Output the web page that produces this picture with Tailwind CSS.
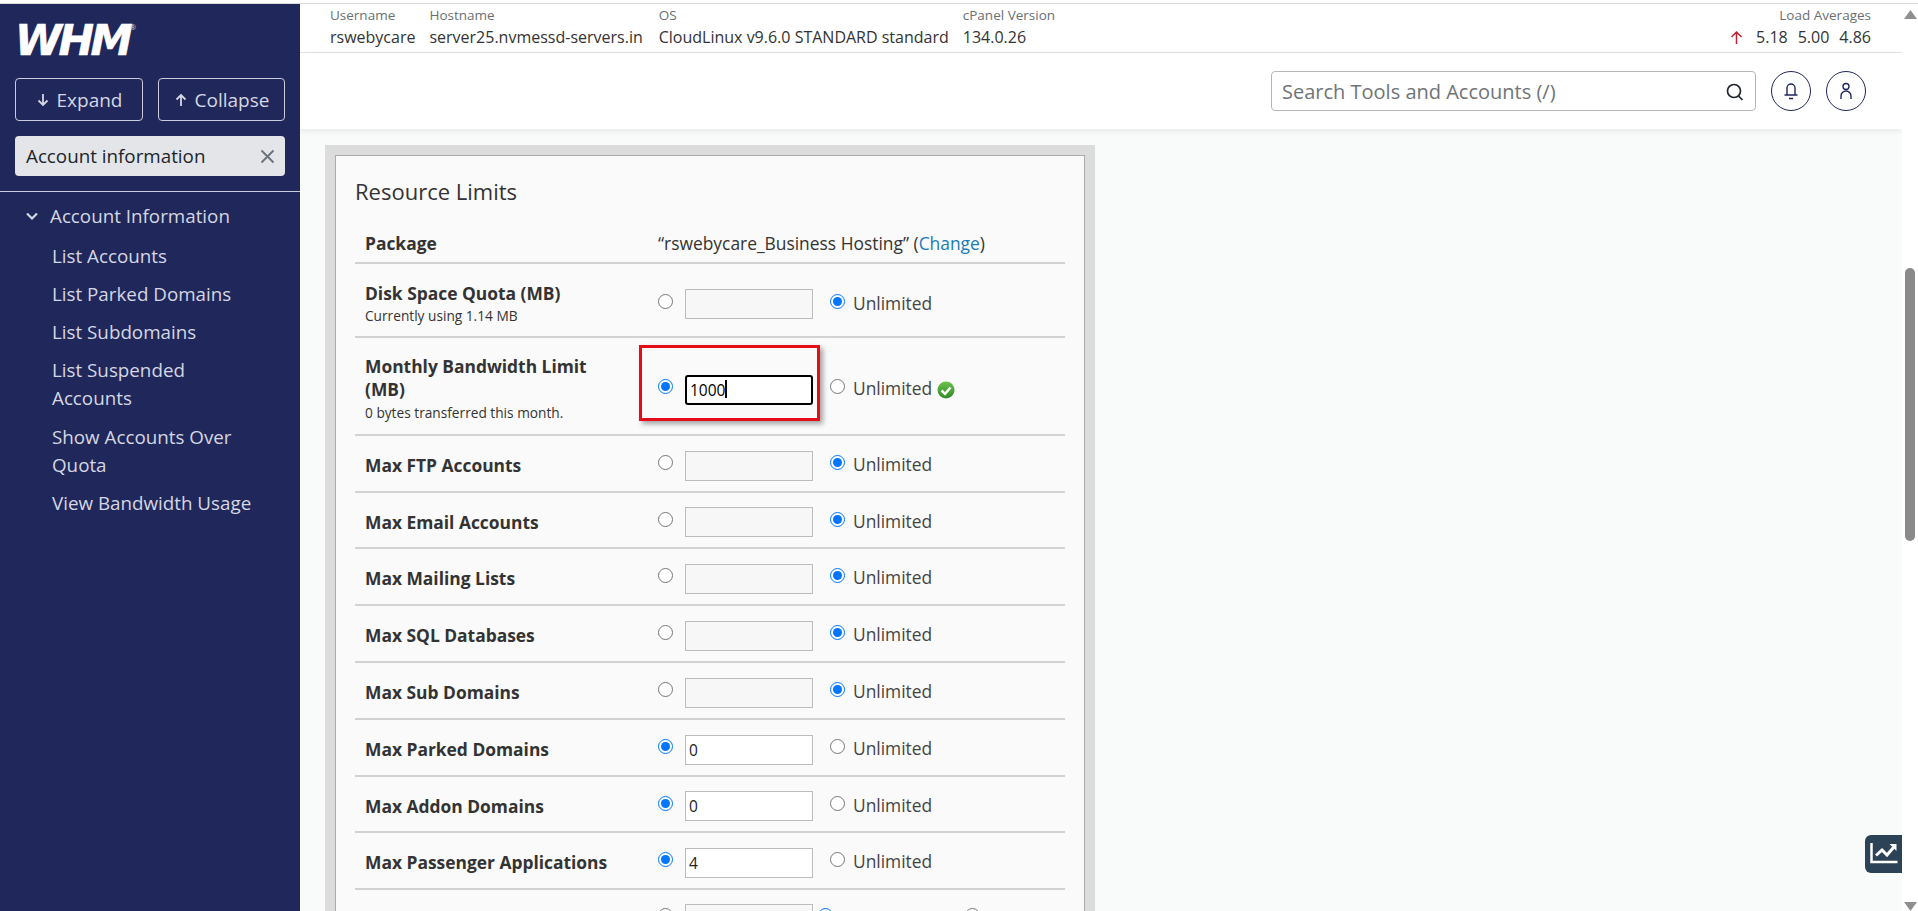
<!DOCTYPE html>
<html lang="en">
<head>
  <meta charset="UTF-8">
  <title>WHM - Resource Limits</title>
  <script src="https://cdn.jsdelivr.net/npm/@tailwindcss/browser@4"></script>
</head>
<body class="h-[911px] overflow-hidden bg-white font-['Open_Sans',sans-serif] text-[#333]">
<div class="h-[3px]"></div>
<div class="flex h-[908px] border-t border-[#dcdcdc]">

  <!-- Sidebar -->
  <aside class="w-[300px] shrink-0 bg-[#20275a] text-[#d5d7e3]">
    <div class="flex h-[74px] items-start pl-[15px] pt-[14px]">
      <span class="font-['DejaVu_Sans',sans-serif] font-bold italic text-[42.500px] leading-[46px] tracking-[-3.500px] text-white [-webkit-text-stroke:0.6px_white]">WHM</span>
      <span class="ml-[1px] mt-[6px] text-[7px] leading-[8px] text-[#c9ccdb]">®</span>
    </div>
    <div class="flex gap-[15px] px-[15px]">
      <button class="flex h-[43px] w-[128px] items-center justify-center gap-[7px] rounded border border-[#c9ccdb] pt-[1px] text-[19px]">
        <svg class="h-[14px] w-[14px]" viewBox="0 0 14 14" fill="none" stroke="currentColor" stroke-width="1.8"><path d="M7 1v11M2.500 7.500 7 12l4.500-4.500"/></svg>
        Expand
      </button>
      <button class="flex h-[43px] w-[127px] items-center justify-center gap-[7px] rounded border border-[#c9ccdb] pt-[1px] text-[19px]">
        <svg class="h-[14px] w-[14px]" viewBox="0 0 14 14" fill="none" stroke="currentColor" stroke-width="1.8"><path d="M7 13V2M2.500 6.500 7 2l4.500 4.500"/></svg>
        Collapse
      </button>
    </div>
    <div class="mx-[15px] mt-[15px] flex h-[40px] items-center justify-between rounded bg-[#e3e5e8] pl-[11px] pr-[10px] text-[18.800px] text-[#20242c]">
      Account information
      <svg class="h-[15px] w-[15px]" viewBox="0 0 15 15" fill="none" stroke="#6b7178" stroke-width="1.8"><path d="M1.500 1.500l12 12M13.500 1.500l-12 12"/></svg>
    </div>
    <div class="mt-[15px] border-t border-[#c9ccdb] pt-[8px] text-[18.800px]">
      <div class="flex h-[32px] items-center pl-[26px]">
        <svg class="mr-[12px] h-[12px] w-[12px]" viewBox="0 0 12 12" fill="none" stroke="currentColor" stroke-width="2.200"><path d="M1 3.500l5 5 5-5"/></svg>
        Account Information
      </div>
      <ul class="mt-[5px] pl-[52px] pr-[20px] leading-[28px]">
        <li class="py-[5px]">List Accounts</li>
        <li class="py-[5px]">List Parked Domains</li>
        <li class="py-[5px]">List Subdomains</li>
        <li class="pb-[6px] pt-[5px]">List Suspended<br>Accounts</li>
        <li class="py-[5px]">Show Accounts Over<br>Quota</li>
        <li class="py-[5px]">View Bandwidth Usage</li>
      </ul>
    </div>
  </aside>

  <!-- Main -->
  <main class="relative flex h-full w-[1602px] flex-col overflow-hidden bg-[#f9fafa]">
    <div class="flex h-[49px] shrink-0 items-start justify-between border-b border-[#e1e3e4] bg-white pl-[30px] pr-[31px] pt-[1px]">
      <div class="flex">
        <div class="mr-[14px]"><p class="text-[13.500px] leading-[20px] text-[#6a6f73]">Username</p><p class="text-[16px] leading-[25px]">rswebycare</p></div>
        <div class="mr-[16px]"><p class="text-[13.500px] leading-[20px] text-[#6a6f73]">Hostname</p><p class="text-[16px] leading-[25px]">server25.nvmessd-servers.in</p></div>
        <div class="mr-[14px]"><p class="text-[13.500px] leading-[20px] text-[#6a6f73]">OS</p><p class="text-[16px] leading-[25px]">CloudLinux v9.6.0 STANDARD standard</p></div>
        <div><p class="text-[13.500px] leading-[20px] text-[#6a6f73]">cPanel Version</p><p class="text-[16px] leading-[25px]">134.0.26</p></div>
      </div>
      <div class="text-right">
        <p class="text-[13.500px] leading-[20px] text-[#6a6f73]">Load Averages</p>
        <p class="flex items-center justify-end gap-[10px] text-[16px] leading-[25px]">
          <svg class="mr-[3px] h-[15px] w-[13px]" viewBox="0 0 13 15" fill="none" stroke="#c4202f" stroke-width="1.5"><path d="M6.500 14V2M1.500 7l5-5 5 5"/></svg>
          <span>5.18</span><span>5.00</span><span>4.86</span>
        </p>
      </div>
    </div>
    <div class="flex h-[76px] shrink-0 items-center justify-end gap-[15px] bg-white pr-[36px] shadow-[0_2px_6px_rgba(0,0,0,0.08)]">
      <div class="flex h-[40px] w-[485px] items-center justify-between rounded border border-[#b5b8bb] bg-white pl-[10px] pr-[10px] pt-[1px] text-[20px] text-[#6f7478]">
        Search Tools and Accounts (/)
        <svg class="h-[20px] w-[20px]" viewBox="0 0 20 20" fill="none" stroke="#20242c" stroke-width="1.7"><circle cx="9" cy="9" r="6.500"/><path d="M13.500 14l4 4"/></svg>
      </div>
      <span class="flex h-[40px] w-[40px] items-center justify-center rounded-full border border-[#20275a]">
        <svg class="h-[20px] w-[20px]" viewBox="0 0 20 20" fill="none" stroke="#20275a" stroke-width="1.400"><path d="M6 13.500V7a4 4 0 0 1 8 0v6.500M3.500 14h13M8 17.500h4"/></svg>
      </span>
      <span class="flex h-[40px] w-[40px] items-center justify-center rounded-full border border-[#20275a]">
        <svg class="h-[20px] w-[20px]" viewBox="0 0 20 20" fill="none" stroke="#20275a" stroke-width="1.400"><circle cx="10" cy="5.500" r="3"/><path d="M5 18v-3a5 5 0 0 1 10 0v3"/></svg>
      </span>
    </div>

    <!-- Resource limits card -->
    <div class="ml-[25px] mt-[16px] h-[800px] w-[770px] shrink-0 border-x-[10px] border-t-[10px] border-[#dcdcdc]">
      <div class="h-full border-x border-t border-[#a9abad] bg-[#fafafa] px-[19px]">
        <h2 class="flex h-[60px] items-center pt-[10px] text-[22px] font-normal text-[#333]">Resource Limits</h2>
        <div class="flex h-[48px] items-center border-b-2 border-[#d2d2d2] pl-[10px] pt-[8px]">
          <span class="w-[293px] text-[17.400px] font-bold">Package</span>
          <span class="text-[17.400px]">“rswebycare_Business Hosting” (<a href="#" class="text-[#1b7cb6]">Change</a>)</span>
        </div>

        <div class="flex h-[74px] items-center border-b-2 border-[#d2d2d2] pl-[10px] pt-[8px]">
          <div class="w-[293px]"><p class="text-[17.400px] font-bold leading-[24px]">Disk Space Quota (MB)</p><p class="text-[13.700px] leading-[22px]">Currently using 1.14 MB</p></div>
          <input type="radio" name="disk" class="mb-[6px] h-[15px] w-[15px] accent-[#0075ff]">
          <input type="text" disabled class="ml-[12px] h-[30px] w-[128px] border border-[#bcbcbc] bg-[#f7f7f7]">
          <input type="radio" name="disk" checked class="mb-[6px] ml-[17px] h-[15px] w-[15px] accent-[#0075ff]">
          <span class="mb-[2px] ml-[8px] text-[17.400px] text-[#444]">Unlimited</span>
        </div>

        <div class="flex h-[98px] items-center border-b-2 border-[#d2d2d2] pl-[10px] pt-[7px]">
          <div class="w-[293px]"><p class="text-[17.400px] font-bold leading-[23px]">Monthly Bandwidth Limit<br>(MB)</p><p class="text-[13.700px] leading-[24px]">0 bytes transferred this month.</p></div>
          <input type="radio" name="bw" checked class="mb-[6px] h-[15px] w-[15px] accent-[#0075ff]">
          <input type="text" value="1000" class="ml-[12px] h-[30px] w-[128px] rounded-[3px] border-2 border-black bg-white pl-[3px] text-[15.500px] text-black outline-none">
          <input type="radio" name="bw" class="mb-[6px] ml-[17px] h-[15px] w-[15px] accent-[#0075ff]">
          <span class="mb-[2px] ml-[8px] text-[17.400px] text-[#444]">Unlimited</span>
          <svg class="ml-[5px] h-[18px] w-[18px]" viewBox="0 0 18 18"><defs><linearGradient id="ok" x1="0" y1="0" x2="0" y2="1"><stop offset="0" stop-color="#6cc24a"/><stop offset="1" stop-color="#2c8a26"/></linearGradient></defs><circle cx="9" cy="9" r="8.500" fill="url(#ok)"/><path d="M4.500 9.500 8 13l5.500-6.500" fill="none" stroke="#fff" stroke-width="2.500"/></svg>
        </div>

        <div class="flex h-[57px] items-center border-b-2 border-[#d2d2d2] pl-[10px] pt-[4px]">
          <span class="w-[293px] text-[17.400px] font-bold">Max FTP Accounts</span>
          <input type="radio" name="ftp" class="mb-[6px] h-[15px] w-[15px] accent-[#0075ff]">
          <input type="text" disabled class="ml-[12px] h-[30px] w-[128px] border border-[#bcbcbc] bg-[#f7f7f7]">
          <input type="radio" name="ftp" checked class="mb-[6px] ml-[17px] h-[15px] w-[15px] accent-[#0075ff]">
          <span class="mb-[2px] ml-[8px] text-[17.400px] text-[#444]">Unlimited</span>
        </div>
        <div class="flex h-[56px] items-center border-b-2 border-[#d2d2d2] pl-[10px] pt-[4px]">
          <span class="w-[293px] text-[17.400px] font-bold">Max Email Accounts</span>
          <input type="radio" name="email" class="mb-[6px] h-[15px] w-[15px] accent-[#0075ff]">
          <input type="text" disabled class="ml-[12px] h-[30px] w-[128px] border border-[#bcbcbc] bg-[#f7f7f7]">
          <input type="radio" name="email" checked class="mb-[6px] ml-[17px] h-[15px] w-[15px] accent-[#0075ff]">
          <span class="mb-[2px] ml-[8px] text-[17.400px] text-[#444]">Unlimited</span>
        </div>
        <div class="flex h-[57px] items-center border-b-2 border-[#d2d2d2] pl-[10px] pt-[4px]">
          <span class="w-[293px] text-[17.400px] font-bold">Max Mailing Lists</span>
          <input type="radio" name="lists" class="mb-[6px] h-[15px] w-[15px] accent-[#0075ff]">
          <input type="text" disabled class="ml-[12px] h-[30px] w-[128px] border border-[#bcbcbc] bg-[#f7f7f7]">
          <input type="radio" name="lists" checked class="mb-[6px] ml-[17px] h-[15px] w-[15px] accent-[#0075ff]">
          <span class="mb-[2px] ml-[8px] text-[17.400px] text-[#444]">Unlimited</span>
        </div>
        <div class="flex h-[57px] items-center border-b-2 border-[#d2d2d2] pl-[10px] pt-[4px]">
          <span class="w-[293px] text-[17.400px] font-bold">Max SQL Databases</span>
          <input type="radio" name="sql" class="mb-[6px] h-[15px] w-[15px] accent-[#0075ff]">
          <input type="text" disabled class="ml-[12px] h-[30px] w-[128px] border border-[#bcbcbc] bg-[#f7f7f7]">
          <input type="radio" name="sql" checked class="mb-[6px] ml-[17px] h-[15px] w-[15px] accent-[#0075ff]">
          <span class="mb-[2px] ml-[8px] text-[17.400px] text-[#444]">Unlimited</span>
        </div>
        <div class="flex h-[57px] items-center border-b-2 border-[#d2d2d2] pl-[10px] pt-[4px]">
          <span class="w-[293px] text-[17.400px] font-bold">Max Sub Domains</span>
          <input type="radio" name="sub" class="mb-[6px] h-[15px] w-[15px] accent-[#0075ff]">
          <input type="text" disabled class="ml-[12px] h-[30px] w-[128px] border border-[#bcbcbc] bg-[#f7f7f7]">
          <input type="radio" name="sub" checked class="mb-[6px] ml-[17px] h-[15px] w-[15px] accent-[#0075ff]">
          <span class="mb-[2px] ml-[8px] text-[17.400px] text-[#444]">Unlimited</span>
        </div>
        <div class="flex h-[57px] items-center border-b-2 border-[#d2d2d2] pl-[10px] pt-[4px]">
          <span class="w-[293px] text-[17.400px] font-bold">Max Parked Domains</span>
          <input type="radio" name="parked" checked class="mb-[6px] h-[15px] w-[15px] accent-[#0075ff]">
          <input type="text" value="0" class="ml-[12px] h-[30px] w-[128px] border border-[#bcbcbc] bg-white pl-[3px] text-[15.500px] text-[#222]">
          <input type="radio" name="parked" class="mb-[6px] ml-[17px] h-[15px] w-[15px] accent-[#0075ff]">
          <span class="mb-[2px] ml-[8px] text-[17.400px] text-[#444]">Unlimited</span>
        </div>
        <div class="flex h-[56px] items-center border-b-2 border-[#d2d2d2] pl-[10px] pt-[4px]">
          <span class="w-[293px] text-[17.400px] font-bold">Max Addon Domains</span>
          <input type="radio" name="addon" checked class="mb-[6px] h-[15px] w-[15px] accent-[#0075ff]">
          <input type="text" value="0" class="ml-[12px] h-[30px] w-[128px] border border-[#bcbcbc] bg-white pl-[3px] text-[15.500px] text-[#222]">
          <input type="radio" name="addon" class="mb-[6px] ml-[17px] h-[15px] w-[15px] accent-[#0075ff]">
          <span class="mb-[2px] ml-[8px] text-[17.400px] text-[#444]">Unlimited</span>
        </div>
        <div class="flex h-[57px] items-center border-b-2 border-[#d2d2d2] pl-[10px] pt-[4px]">
          <span class="w-[293px] text-[17.400px] font-bold">Max Passenger Applications</span>
          <input type="radio" name="passenger" checked class="mb-[6px] h-[15px] w-[15px] accent-[#0075ff]">
          <input type="text" value="4" class="ml-[12px] h-[30px] w-[128px] border border-[#bcbcbc] bg-white pl-[3px] text-[15.500px] text-[#222]">
          <input type="radio" name="passenger" class="mb-[6px] ml-[17px] h-[15px] w-[15px] accent-[#0075ff]">
          <span class="mb-[2px] ml-[8px] text-[17.400px] text-[#444]">Unlimited</span>
        </div>
        <div class="flex h-[57px] items-start pl-[10px] pt-[14px]">
          <span class="w-[293px]"></span>
          <input type="radio" name="last" class="mt-[4px] h-[15px] w-[15px] accent-[#0075ff]">
          <input type="text" disabled class="ml-[12px] h-[30px] w-[128px] border border-[#bcbcbc] bg-[#f7f7f7]">
          <input type="radio" name="last" checked class="ml-[5px] mt-[4px] h-[15px] w-[15px] accent-[#0075ff]">
          <input type="radio" name="last" class="ml-[132px] mt-[4px] h-[15px] w-[15px] accent-[#0075ff]">
        </div>
      </div>
    </div>

    <!-- Red annotation round the bandwidth field -->
    <div class="absolute left-[339px] top-[341px] h-[76px] w-[181px] border-[3px] border-[#e50d18] shadow-[3px_3px_5px_rgba(0,0,0,0.35)]"></div>
    <!-- Text cursor in the field -->
    <div class="absolute left-[425px] top-[376px] h-[18px] w-[1.500px] bg-black"></div>

    <!-- Floating chart button -->
    <button class="absolute right-0 top-[831px] flex h-[38px] w-[37px] items-center justify-center rounded-l-[6px] bg-[#2c4256]">
      <svg class="h-[38px] w-[37px]" viewBox="0 0 37 38" fill="none" stroke="#fff"><path d="M6.500 8v19h26" stroke-width="2.500"/><path d="M11 20.500l6-5.500 5 5 6.500-7.500" stroke-width="3"/><path d="M24.500 9h7v7z" fill="#fff" stroke="none"/></svg>
    </button>
  </main>

  <!-- Scrollbar -->
  <div class="flex w-[16px] shrink-0 flex-col items-center bg-white">
    <svg class="mt-[6px] h-[9px] w-[13px] shrink-0" viewBox="0 0 13 9"><path d="M6.500 0 13 9H0z" fill="#8f8f8f"/></svg>
    <div class="mt-[249px] h-[273px] w-[10px] rounded-full bg-[#8a8a8a]"></div>
    <svg class="mt-auto h-[9px] w-[13px] shrink-0" viewBox="0 0 13 9"><path d="M0 0h13L6.500 9z" fill="#8f8f8f"/></svg>
  </div>
</div>
</body>
</html>
